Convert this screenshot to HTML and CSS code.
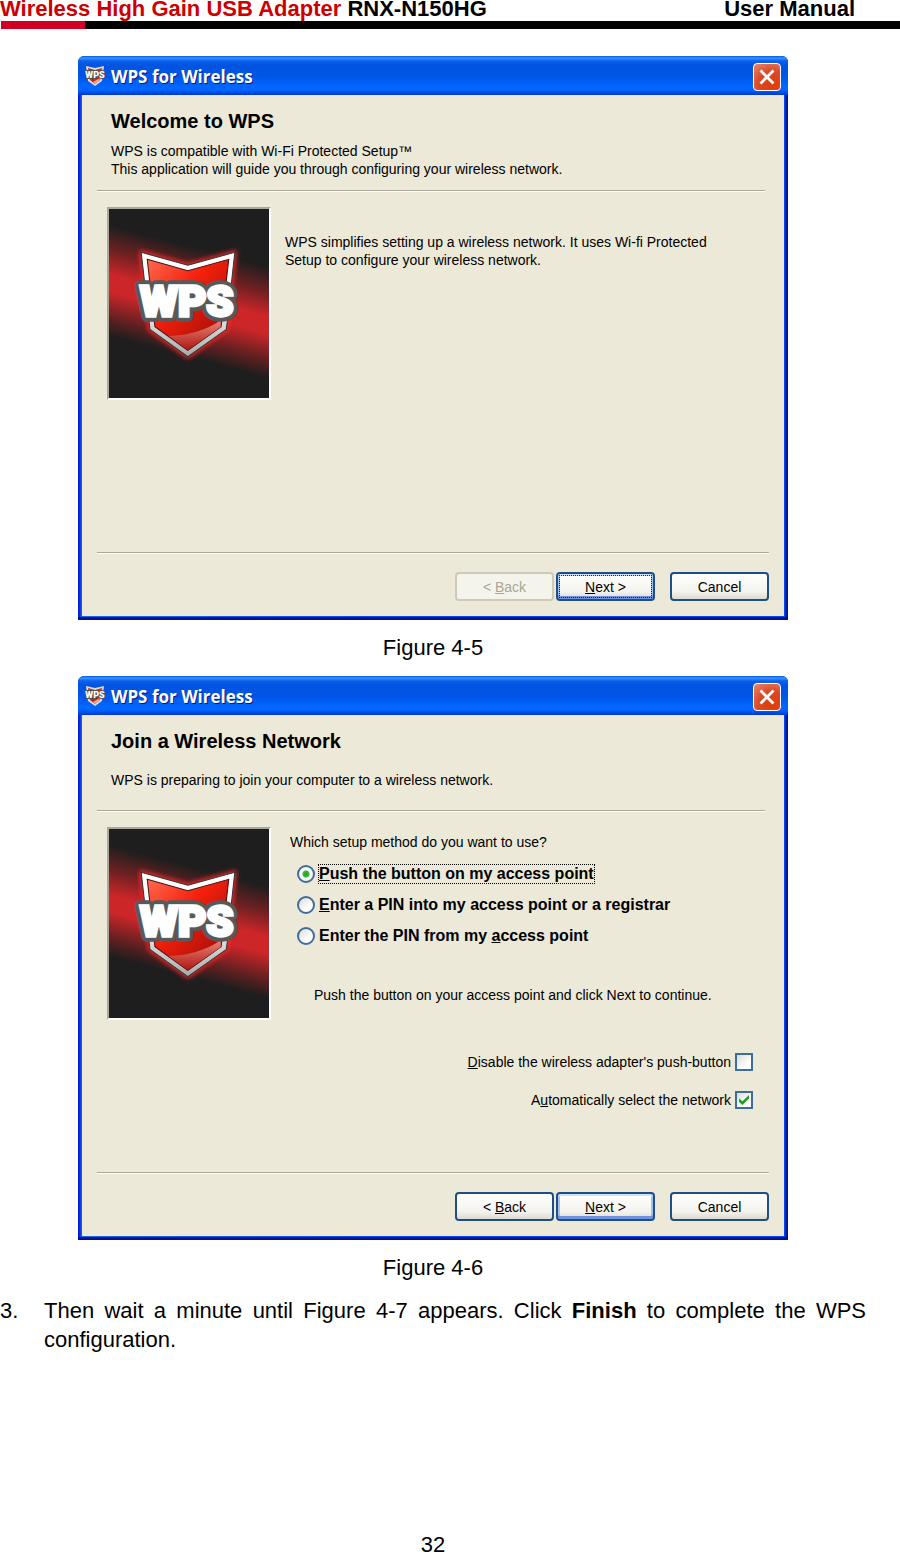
FILE: index.html
```html
<!DOCTYPE html>
<html lang="en">
<head>
  <meta charset="utf-8">
  <meta name="viewport" content="width=device-width, initial-scale=1">
  <title>RNX-N150HG User Manual</title>
  <link rel="stylesheet" href="styles.css">
</head>
<body>
  <svg class="defs" aria-hidden="true">
    <defs>
      <linearGradient id="band" x1="0" y1="0" x2="0" y2="1">
        <stop offset="0" stop-color="#1e1e1e"/>
        <stop offset=".22" stop-color="#6b2022"/>
        <stop offset=".45" stop-color="#cd2629"/>
        <stop offset=".6" stop-color="#cd2629"/>
        <stop offset=".85" stop-color="#5c1f20"/>
        <stop offset="1" stop-color="#1e1e1e"/>
      </linearGradient>
      <linearGradient id="shield" x1="0" y1="0" x2="1" y2="1">
        <stop offset="0" stop-color="#ff6a50"/>
        <stop offset=".4" stop-color="#f5200c"/>
        <stop offset="1" stop-color="#8e0a08"/>
      </linearGradient>
      <linearGradient id="rim" x1="0" y1="0" x2="0" y2="1">
        <stop offset="0" stop-color="#fff"/>
        <stop offset=".5" stop-color="#f4f4f4"/>
        <stop offset="1" stop-color="#a9a9a9"/>
      </linearGradient>
      <linearGradient id="shine" x1="0" y1="0" x2="0" y2="1">
        <stop offset="0" stop-color="#e8857a"/>
        <stop offset="1" stop-color="#b01812"/>
      </linearGradient>
      <filter id="glow" x="-20%" y="-20%" width="140%" height="140%">
        <feGaussianBlur stdDeviation="8"/>
      </filter>
      <symbol id="logo" viewBox="30 27 477 567" preserveAspectRatio="none">
        <rect x="30" y="27" width="477" height="567" fill="#1e1e1e"/>
        <rect x="20" y="65" width="500" height="335" fill="url(#band)" transform="skewY(15)"/>
        <path d="M126 157 L265 196 L405 157 L380 388 L265 470 L152 388 Z" fill="#ff2626" stroke="#ff2626" stroke-width="10" filter="url(#glow)"/>
        <path d="M126 157 L265 196 L405 157 L380 388 L265 470 L152 388 Z" fill="url(#rim)" stroke="#333" stroke-width="3"/>
        <path d="M144 178 L265 212 L387 178 L364 380 L265 451 L167 380 Z" fill="url(#shield)" stroke="#4a1010" stroke-width="3"/>
        <path d="M208 408 Q300 405 364 360 L363 381 L265 450 Z" fill="url(#shine)"/>
        <text x="262" y="348" class="logo-text logo-outline">WPS</text>
        <text x="262" y="348" class="logo-text logo-fill">WPS</text>
      </symbol>
      <symbol id="icon" viewBox="0 0 20 20">
        <path d="M1 0 L10 2 L19 0 L17 15 L10 20 L3 15 Z" fill="#dcdcdc"/>
        <path d="M3 2 L10 4 L17 2 L15 14 L10 18 L5 14 Z" fill="#d8200f"/>
        <path d="M8 16 L15 12 L14 15 L10 18 Z" fill="#e9a9a0"/>
        <text x="10" y="12" class="icon-text">WPS</text>
      </symbol>
    </defs>
  </svg>

  <header class="page-header">
    <div class="page-title">
      <span><span class="product">Wireless High Gain USB Adapter</span> RNX-N150HG</span>
      <span>User Manual</span>
    </div>
    <div class="rule"></div>
  </header>

  <main>
    <figure>
      <section class="window">
        <div class="titlebar">
          <svg class="app-icon"><use href="#icon"/></svg>
          <span class="window-title">WPS for Wireless</span>
          <button class="close" type="button" aria-label="Close">
            <svg viewBox="0 0 28 28"><path d="M7 7 L21 21 M21 7 L7 21" stroke="#fff" stroke-width="3"/></svg>
          </button>
        </div>
        <div class="client">
          <div class="intro">
            <h2>Welcome to WPS</h2>
            <div class="description">
              <p>WPS is compatible with Wi-Fi Protected Setup™<br>This application will guide you through configuring your wireless network.</p>
            </div>
          </div>
          <div class="content">
            <svg class="logo"><use href="#logo"/></svg>
            <p class="welcome">WPS simplifies setting up a wireless network. It uses Wi-fi Protected<br>Setup to configure your wireless network.</p>
          </div>
          <div class="buttons">
            <button type="button" disabled>&lt; <u>B</u>ack</button>
            <button type="button" class="default focused"><u>N</u>ext &gt;</button>
            <button type="button" class="cancel">Cancel</button>
          </div>
        </div>
      </section>
      <figcaption>Figure 4-5</figcaption>
    </figure>

    <figure>
      <section class="window">
        <div class="titlebar">
          <svg class="app-icon"><use href="#icon"/></svg>
          <span class="window-title">WPS for Wireless</span>
          <button class="close" type="button" aria-label="Close">
            <svg viewBox="0 0 28 28"><path d="M7 7 L21 21 M21 7 L7 21" stroke="#fff" stroke-width="3"/></svg>
          </button>
        </div>
        <div class="client">
          <div class="intro">
            <h2>Join a Wireless Network</h2>
            <div class="description">
              <p>WPS is preparing to join your computer to a wireless network.</p>
            </div>
          </div>
          <div class="content">
            <svg class="logo"><use href="#logo"/></svg>
            <div class="setup">
              <p>Which setup method do you want to use?</p>
              <div class="methods">
                <div class="method">
                  <input type="radio" name="method" id="push" checked>
                  <label for="push" class="focus-label"><u>P</u>ush the button on my access point</label>
                </div>
                <div class="method">
                  <input type="radio" name="method" id="pin-enter">
                  <label for="pin-enter"><u>E</u>nter a PIN into my access point or a registrar</label>
                </div>
                <div class="method">
                  <input type="radio" name="method" id="pin-from">
                  <label for="pin-from">Enter the PIN from my <u>a</u>ccess point</label>
                </div>
              </div>
              <p class="hint">Push the button on your access point and click Next to continue.</p>
              <div class="options">
                <div class="option">
                  <label for="disable-push"><u>D</u>isable the wireless adapter's push-button</label>
                  <input type="checkbox" id="disable-push">
                </div>
                <div class="option">
                  <label for="auto-select">A<u>u</u>tomatically select the network</label>
                  <input type="checkbox" id="auto-select" checked>
                </div>
              </div>
            </div>
          </div>
          <div class="buttons">
            <button type="button">&lt; <u>B</u>ack</button>
            <button type="button" class="default"><u>N</u>ext &gt;</button>
            <button type="button" class="cancel">Cancel</button>
          </div>
        </div>
      </section>
      <figcaption>Figure 4-6</figcaption>
    </figure>

    <div class="step">
      <span class="step-number">3.</span>
      <p>Then wait a minute until Figure 4-7 appears. Click <b>Finish</b> to complete the WPS configuration.</p>
    </div>
  </main>

  <footer>32</footer>
</body>
</html>
```
FILE: styles.css
```css
* {
  box-sizing: border-box;
}

body {
  display: flex;
  flex-direction: column;
  min-height: 100vh;
  margin: 0;
  background: #fff;
  color: #000;
  font-family: "Liberation Sans", Arial, sans-serif;
  font-size: 22px;
}

h2, p, figure {
  margin: 0;
}

.defs {
  position: absolute;
  width: 0;
  height: 0;
}

/* page header */
.page-title {
  display: flex;
  justify-content: space-between;
  padding: 0 45px 3px 0;
  font-weight: bold;
  line-height: 18px;
}

.product {
  color: #c00;
}

.rule {
  height: 8px;
  margin-left: 1px;
  background: linear-gradient(to right, #cf0024 84px, #000 84px);
}

main {
  padding: 27px 34px 0 0;
}

figcaption {
  line-height: 56px;
  text-align: center;
}

.step {
  display: flex;
  line-height: 29px;
}

.step-number {
  flex: 0 0 44px;
}

.step p {
  flex: 1;
  text-align: justify;
}

footer {
  margin-top: auto;
  padding-right: 34px;
  line-height: 14px;
  text-align: center;
}

/* XP window */
.window {
  max-width: 710px;
  margin: 0 auto;
  padding: 0 4px 4px;
  border-radius: 6px 6px 0 0;
  background: linear-gradient(to right, #0019cf 0, #0831d9 2px, #166aee 4px, #0048f1 50%, #0048f1 calc(100% - 3px), #001590 calc(100% - 2px));
  box-shadow: inset 0 -3px #00138c;
  font-size: 14px;
  line-height: 18px;
}

.titlebar {
  display: flex;
  align-items: center;
  height: 39px;
  margin: 0 -4px;
  padding: 3px 7px 0;
  border-radius: 6px 6px 0 0;
  background: linear-gradient(#0058e6 0, #3a93ff 2px, #0a60ee 5px, #0054e0 9px, #0055e5 20px, #0066ff 30px, #0066ff 34px, #003dd7 38px);
}

.app-icon {
  width: 20px;
  height: 20px;
  margin-bottom: 3px;
  overflow: visible;
}

.window-title {
  margin-left: 6px;
  color: #fff;
  font-family: "Open Sans", sans-serif;
  font-size: 17px;
  font-weight: bold;
  text-shadow: 1px 1px #0a1883;
}

.close {
  width: 28px;
  height: 28px;
  margin-left: auto;
  padding: 0;
  border: 1px solid #fff;
  border-radius: 4px;
  background: radial-gradient(circle at 70% 80%, #e03c05, #da4a26 50%, #e88a70);
}

.close svg {
  display: block;
}

.client {
  padding: 14px 15px 15px;
  background: #ece9d8;
}

.intro {
  margin-right: 4px;
  padding: 0 14px 13px;
  border-bottom: 1px solid #fff;
  box-shadow: inset 0 -1px #aca899;
}

.intro h2 {
  font-size: 20px;
  line-height: 24px;
}

.description {
  display: flex;
  align-items: center;
  min-height: 36px;
  margin-top: 9px;
}

.content {
  display: flex;
  gap: 14px;
  min-height: 360px;
  padding: 15px 16px 0 10px;
}

.logo {
  flex: none;
  width: 164px;
  height: 193px;
  border: 2px solid;
  border-color: #aca899 #fff #fff #aca899;
}

.logo-text {
  font-family: Roboto, "Liberation Sans", sans-serif;
  font-size: 130px;
  font-weight: 900;
  text-anchor: middle;
  stroke-linejoin: round;
}

.logo-outline {
  fill: #58595b;
  stroke: #58595b;
  stroke-width: 34px;
}

.logo-fill {
  fill: #fff;
  stroke: #fff;
  stroke-width: 10px;
  stroke-linejoin: miter;
}

.icon-text {
  fill: #fff;
  stroke: #555;
  stroke-width: 2px;
  paint-order: stroke;
  font-family: Roboto, "Liberation Sans", sans-serif;
  font-size: 9px;
  font-weight: 900;
  text-anchor: middle;
}

.welcome {
  padding-top: 26px;
}

.setup {
  flex: 1;
  padding: 6px 0 0 5px;
}

.methods {
  display: grid;
  gap: 11px;
  margin: 13px 0 0 7px;
  font-size: 16px;
  font-weight: bold;
}

.method {
  display: flex;
  align-items: center;
  gap: 3px;
  height: 20px;
}

.method label {
  border: 1px solid transparent;
}

.method .focus-label {
  border: 1px dotted #000;
}

.hint {
  margin: 40px 0 0 24px;
}

.options {
  display: grid;
  gap: 20px;
  justify-items: end;
  margin-top: 49px;
}

.option {
  display: flex;
  gap: 4px;
}

input {
  appearance: none;
  flex: none;
  width: 18px;
  height: 18px;
  margin: 0;
  border: 2px solid #3f6d9b;
  background: linear-gradient(135deg, #dcdcd7, #fff 70%);
}

input[type="radio"] {
  border-radius: 50%;
}

input[type="radio"]:checked {
  background: radial-gradient(circle, #21a121 0, #3cb53c 3px, #f6f6f4 4px);
}

input[type="checkbox"]:checked::before {
  content: "";
  display: block;
  width: 10px;
  height: 10px;
  margin: 2px;
  background: #21a121;
  clip-path: polygon(0 35%, 35% 62%, 100% 0, 100% 35%, 35% 100%, 0 70%);
}

.buttons {
  display: flex;
  justify-content: flex-end;
  gap: 2px;
  padding-top: 19px;
  border-top: 1px solid #aca899;
  box-shadow: inset 0 1px #fff;
}

.buttons button {
  width: 99px;
  height: 29px;
  padding: 0;
  border: 2px solid #1d4f86;
  border-radius: 4px;
  background: linear-gradient(#fff, #f4f3ee 70%, #dedbcf);
  color: #000;
  font: inherit;
}

.buttons .default {
  box-shadow: inset 0 2px #cee0fb, inset 0 -3px #6e92df, inset 2px 0 #a4bff0, inset -2px 0 #a4bff0;
}

.buttons .focused {
  outline: 1px dotted #222;
  outline-offset: -4px;
}

.buttons .cancel {
  margin-left: 13px;
}

.buttons button:disabled {
  border-color: #cdcabb;
  background: #f5f4ea;
  color: #a9a796;
}
```
